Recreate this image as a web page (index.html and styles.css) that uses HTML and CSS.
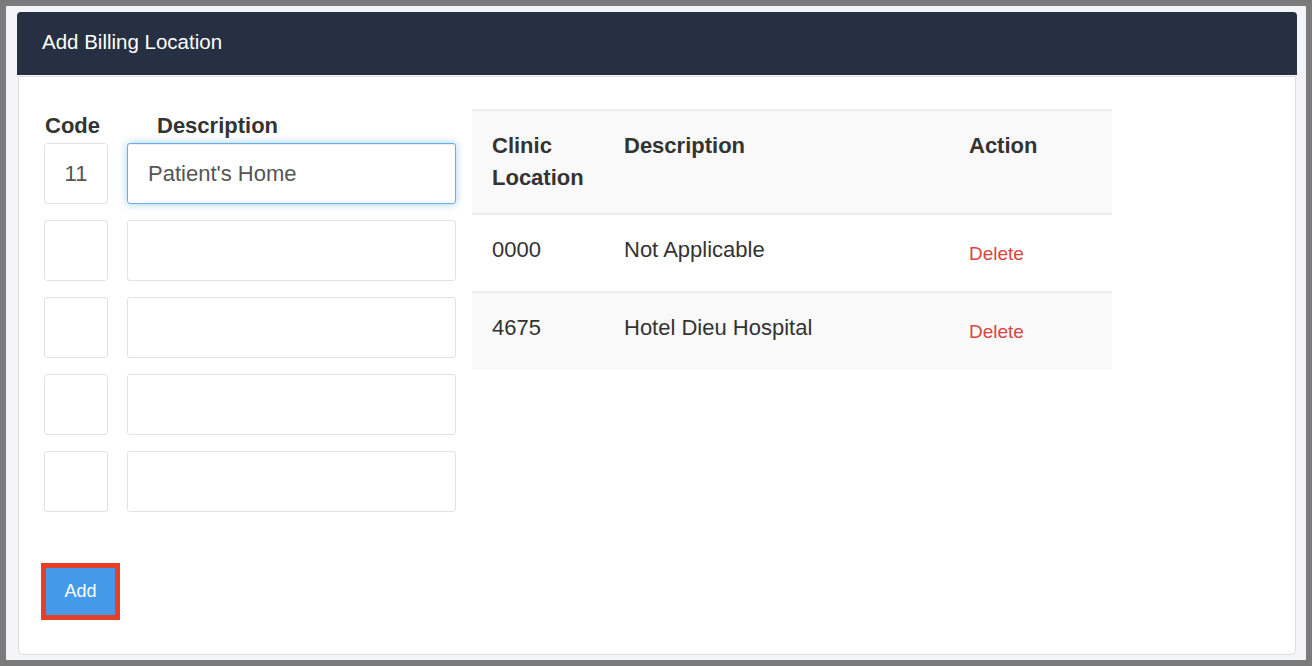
FILE: index.html
```
<!DOCTYPE html>
<html lang="en">
<head>
    <meta charset="UTF-8">
    <title>Add Billing Location</title>
    <link rel="stylesheet" href="styles.css">
</head>
<body>
    <div class="frame">
        <div class="panel">
            <div class="panel-header">Add Billing Location</div>
            <div class="panel-body">
                <div class="layout">
                    <div class="form">
                        <div class="labels">
                            <span class="label-code">Code</span>
                            <span class="label-desc">Description</span>
                        </div>
                        <div class="fields">
                            <input class="field code" type="text" value="11">
                            <input class="field desc focused" type="text" value="Patient's Home">
                            <input class="field code" type="text">
                            <input class="field desc" type="text">
                            <input class="field code" type="text">
                            <input class="field desc" type="text">
                            <input class="field code" type="text">
                            <input class="field desc" type="text">
                            <input class="field code" type="text">
                            <input class="field desc" type="text">
                        </div>
                    </div>

                    <table class="locations">
                        <colgroup>
                            <col style="width: 132px">
                            <col style="width: 345px">
                            <col style="width: 163px">
                        </colgroup>
                        <thead>
                            <tr>
                                <th>Clinic<br>Location</th>
                                <th>Description</th>
                                <th>Action</th>
                            </tr>
                        </thead>
                        <tbody>
                            <tr>
                                <td>0000</td>
                                <td>Not Applicable</td>
                                <td><a class="delete" href="#">Delete</a></td>
                            </tr>
                            <tr class="striped">
                                <td>4675</td>
                                <td>Hotel Dieu Hospital</td>
                                <td><a class="delete" href="#">Delete</a></td>
                            </tr>
                        </tbody>
                    </table>
                </div>

                <button class="add-button">Add</button>
            </div>
        </div>
    </div>
</body>
</html>
```

FILE: styles.css
```
body {
    margin: 0;
    background-color: #7a7a7a;
    font-family: 'Liberation Sans', Arial, sans-serif;
    color: #333;
}
.frame {
    margin: 6px;
    height: 654px;
    box-sizing: border-box;
    background-color: #f4f5f9;
    padding: 6px 9px 0 11px;
}
.panel-header {
    height: 63px;
    box-sizing: border-box;
    display: flex;
    align-items: center;
    padding: 0 0 3px 25px;
    background-color: #273042;
    color: white;
    font-size: 20.5px;
    border-radius: 4px 4px 0 0;
}
.panel-body {
    height: 579px;
    box-sizing: border-box;
    margin: 1px 1px 0 1px;
    background-color: white;
    border: 1px solid #dedede;
    border-radius: 0 0 5px 5px;
    padding: 32px 0 0 25px;
}
.layout {
    display: flex;
    align-items: flex-start;
    gap: 16px;
}
.labels {
    display: flex;
    font-size: 22px;
    font-weight: bold;
    line-height: 26px;
    padding-top: 4px;
    margin-bottom: 4px;
}
.label-code {
    width: 83px;
    padding-left: 1px;
}
.label-desc {
    padding-left: 29px;
}
.fields {
    display: grid;
    grid-template-columns: 64px 329px;
    grid-auto-rows: 61px;
    column-gap: 19px;
    row-gap: 16px;
}
.field {
    height: 61px;
    box-sizing: border-box;
    border: 1px solid #e2e2e2;
    border-radius: 3px;
    font-family: inherit;
    font-size: 22px;
    color: #555;
    padding: 0 20px;
    margin: 0;
    outline: none;
}
.field.code {
    padding: 0;
    text-align: center;
}
.field.focused {
    border-color: #66afe9;
    box-shadow: inset 0 1px 1px rgba(0, 0, 0, 0.075), 0 0 8px rgba(102, 175, 233, 0.6);
}
.locations {
    width: 640px;
    border-collapse: collapse;
    table-layout: fixed;
    font-size: 22px;
    line-height: 32px;
}
.locations th {
    text-align: left;
    vertical-align: top;
    padding: 19px 20px 19px;
    background-color: #f9f9f9;
    border-top: 2px solid #ececec;
    border-bottom: 2px solid #ececec;
}
.locations td {
    vertical-align: top;
    height: 78px;
    box-sizing: border-box;
    padding: 19px 20px 0;
    border-top: 2px solid #ececec;
}
.locations tbody tr:first-child td {
    border-top: none;
}
.locations tr.striped td {
    background-color: #f9f9f9;
}
.delete {
    display: inline-block;
    padding-top: 4px;
    font-size: 19px;
    line-height: 32px;
    color: #d9463f;
    text-decoration: none;
}
.add-button {
    display: block;
    margin: 56px 0 0 2px;
    width: 69px;
    height: 47px;
    border: none;
    background-color: #4499e9;
    color: white;
    font-family: inherit;
    font-size: 18px;
    outline: 5px solid #e63f26;
}
```
